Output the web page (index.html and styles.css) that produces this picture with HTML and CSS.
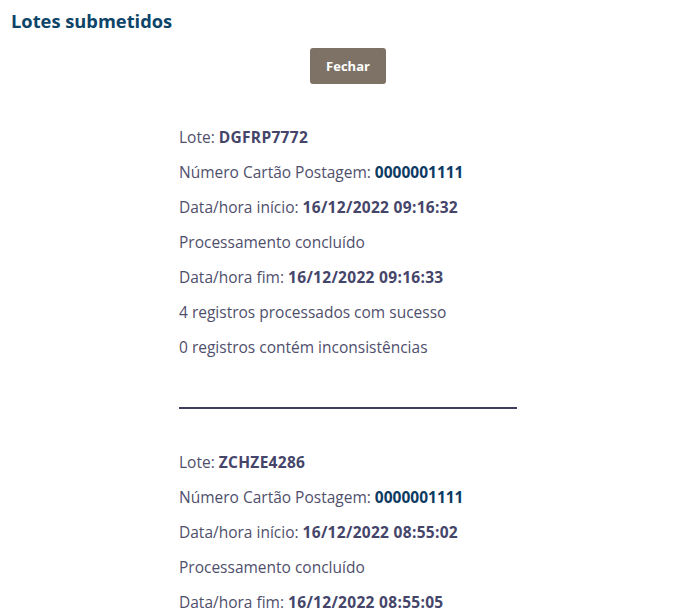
FILE: index.html
```html
<!DOCTYPE html>
<html lang="pt-BR">
<head>
<meta charset="UTF-8" />
<meta name="viewport" content="width=device-width, initial-scale=1" />
<title>Lotes submetidos</title>
<link rel="stylesheet" href="styles.css">
</head>
<body>

<h1 class="title">Lotes submetidos</h1>

<div class="content">
  <div class="actions">
    <button class="btn-close">Fechar</button>
  </div>

  <div class="lote">
    <p>Lote: <b>DGFRP7772</b></p>
    <p>Número Cartão Postagem: <b class="card">0000001111</b></p>
    <p>Data/hora início: <b>16/12/2022 09:16:32</b></p>
    <p>Processamento concluído</p>
    <p>Data/hora fim: <b>16/12/2022 09:16:33</b></p>
    <p>4 registros processados com sucesso</p>
    <p>0 registros contém inconsistências</p>
  </div>
  <hr class="sep">

  <div class="lote">
    <p>Lote: <b>ZCHZE4286</b></p>
    <p>Número Cartão Postagem: <b class="card">0000001111</b></p>
    <p>Data/hora início: <b>16/12/2022 08:55:02</b></p>
    <p>Processamento concluído</p>
    <p>Data/hora fim: <b>16/12/2022 08:55:05</b></p>
    <p>4 registros processados com sucesso</p>
    <p>0 registros contém inconsistências</p>
  </div>
</div>

</body>
</html>
```

FILE: styles.css
```css
body {
  margin: 0; font-family: "Open Sans", sans-serif; background: white; color: #4f4f6c;
}
.title {
  margin: 0; padding: 9px 11px 0; font-size: 18.3px; line-height: 24px; color: #0d4468; font-weight: bold;
}
.content {
  padding-left: 13px;
  display: flex; flex-direction: column; align-items: center;
}
.actions {
  margin-top: 15px;
}
.btn-close {
  width: 76px; height: 36px; border: none; border-radius: 3px;
  background: #7d7265; color: white; font-family: inherit; font-weight: bold; font-size: 13px;
  cursor: pointer;
}
.lote {
  width: 338px; margin-top: 36px;
}
.lote p {
  margin: 0; font-size: 15.5px; line-height: 35px;
}
.lote b {
  font-weight: bold; letter-spacing: 0.3px; color: #45456a;
}
.lote b.card {
  color: #0d3a62; letter-spacing: 0;
}
.sep {
  width: 338px; margin: 42px 0 0; border: none; border-top: 2px solid #3e3e5e;
}
```
